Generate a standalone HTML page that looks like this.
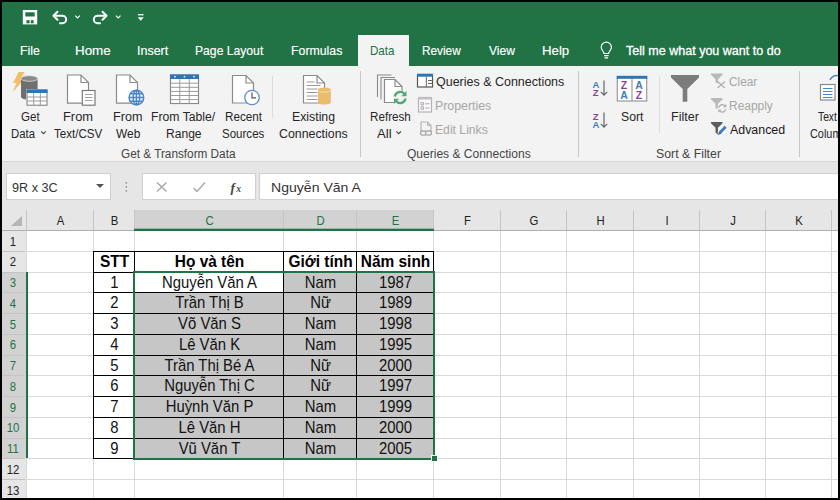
<!DOCTYPE html>
<html lang="vi"><head><meta charset="utf-8"><title>Excel</title>
<style>
html,body{margin:0;padding:0;}
body{width:840px;height:500px;overflow:hidden;background:#000;position:relative;font-family:"Liberation Sans",sans-serif;}
#app{position:absolute;left:0;top:0;width:840px;height:500px;background:#fff;overflow:hidden;}
#app > *{position:absolute;box-sizing:border-box;}
.t{white-space:nowrap;line-height:1;transform-origin:0 0;}
.c{text-align:center;}
#green{left:0;top:0;width:840px;height:66px;background:#217346;}
#ribbon{left:0;top:66px;width:840px;height:95px;background:#f3f3f3;}
#fbar{left:0;top:161px;width:840px;height:49px;background:#e6e6e6;border-top:1px solid #d6d6d6;}
.hdr{font-size:12.600px;color:#222;text-align:center;transform-origin:50% 0;transform:scaleX(0.9);}
.cell{font-size:15.700px;color:#111;text-align:center;transform-origin:50% 0;transform:scaleX(0.948);}
.b{font-weight:bold;color:#000;font-size:15.6px;transform:scaleX(0.99);}
.bk{background:#000;}
</style></head><body><div id="app">

<div id="green"></div>
<div id="ribbon"></div>
<div id="fbar"></div>
<div style="left:357.5px;top:35px;width:51px;height:31px;background:#f3f3f3;"></div>
<div style="left:6px;top:173px;width:104.500px;height:26.500px;background:#fff;border:1px solid #d0d0d0;"></div>
<div style="left:96.100px;top:183.600px;width:0;height:0;border-left:4.200px solid transparent;border-right:4.200px solid transparent;border-top:4px solid #555;"></div>
<div style="left:141.800px;top:173px;width:114px;height:26.500px;background:#fff;border:1px solid #d0d0d0;"></div>
<div style="left:259px;top:173px;width:600px;height:26.500px;background:#fff;border:1px solid #d0d0d0;"></div>
<div class="t" style="left:20.05px;top:43.9px;font-size:13px;color:#fff;-webkit-text-stroke:0.15px #fff;transform:scaleX(0.951);">File</div>
<div class="t" style="left:74.97px;top:43.9px;font-size:13px;color:#fff;-webkit-text-stroke:0.15px #fff;transform:scaleX(1.030);">Home</div>
<div class="t" style="left:136.5px;top:43.9px;font-size:13px;color:#fff;-webkit-text-stroke:0.15px #fff;transform:scaleX(0.960);">Insert</div>
<div class="t" style="left:195.07px;top:43.9px;font-size:13px;color:#fff;-webkit-text-stroke:0.15px #fff;transform:scaleX(0.935);">Page Layout</div>
<div class="t" style="left:290.75px;top:43.9px;font-size:13px;color:#fff;-webkit-text-stroke:0.15px #fff;transform:scaleX(0.948);">Formulas</div>
<div class="t" style="left:369.81px;top:43.9px;font-size:13px;color:#217346;transform:scaleX(0.891);">Data</div>
<div class="t" style="left:422.39px;top:43.9px;font-size:13px;color:#fff;-webkit-text-stroke:0.15px #fff;transform:scaleX(0.908);">Review</div>
<div class="t" style="left:489.07px;top:43.9px;font-size:13px;color:#fff;-webkit-text-stroke:0.15px #fff;transform:scaleX(0.926);">View</div>
<div class="t" style="left:542.28px;top:43.9px;font-size:13px;color:#fff;-webkit-text-stroke:0.15px #fff;transform:scaleX(1.018);">Help</div>
<div class="t" style="left:626.46px;top:43.9px;font-size:13px;color:#fff;-webkit-text-stroke:0.3px #fff;transform:scaleX(0.964);">Tell me what you want to do</div>
<div class="t" style="left:20.84px;top:111.22px;font-size:12.5px;color:#262626;transform:scaleX(0.923);">Get</div>
<div class="t" style="left:10.89px;top:127.82px;font-size:12.5px;color:#262626;transform:scaleX(0.910);">Data</div>
<div class="t" style="left:63.47px;top:111.22px;font-size:12.5px;color:#262626;transform:scaleX(1.028);">From</div>
<div class="t" style="left:54.27px;top:127.82px;font-size:12.5px;color:#262626;transform:scaleX(0.928);">Text/CSV</div>
<div class="t" style="left:112.79px;top:111.22px;font-size:12.5px;color:#262626;transform:scaleX(1.009);">From</div>
<div class="t" style="left:115.5px;top:127.82px;font-size:12.5px;color:#262626;transform:scaleX(0.952);">Web</div>
<div class="t" style="left:150.82px;top:111.22px;font-size:12.5px;color:#262626;transform:scaleX(0.976);">From Table/</div>
<div class="t" style="left:166.04px;top:127.82px;font-size:12.5px;color:#262626;transform:scaleX(0.965);">Range</div>
<div class="t" style="left:224.86px;top:111.22px;font-size:12.5px;color:#262626;transform:scaleX(0.935);">Recent</div>
<div class="t" style="left:221.81px;top:127.82px;font-size:12.5px;color:#262626;transform:scaleX(0.923);">Sources</div>
<div class="t" style="left:292.02px;top:111.22px;font-size:12.5px;color:#262626;transform:scaleX(0.983);">Existing</div>
<div class="t" style="left:279.26px;top:127.82px;font-size:12.5px;color:#262626;transform:scaleX(0.989);">Connections</div>
<div class="t" style="left:369.57px;top:111.22px;font-size:12.5px;color:#262626;transform:scaleX(0.933);">Refresh</div>
<div class="t" style="left:377.4px;top:127.82px;font-size:12.5px;color:#262626;transform:scaleX(1.046);">All</div>
<div class="t" style="left:620.67px;top:111.22px;font-size:12.5px;color:#262626;transform:scaleX(0.977);">Sort</div>
<div class="t" style="left:671px;top:111.22px;font-size:12.5px;color:#262626;transform:scaleX(1.004);">Filter</div>
<div class="t" style="left:435.8px;top:76.42px;font-size:12.5px;color:#262626;transform:scaleX(0.998);">Queries &amp; Connections</div>
<div class="t" style="left:435.31px;top:100.42px;font-size:12.5px;color:#a6a6a6;transform:scaleX(0.986);">Properties</div>
<div class="t" style="left:435.33px;top:124.42px;font-size:12.5px;color:#a6a6a6;transform:scaleX(0.974);">Edit Links</div>
<div class="t" style="left:729.29px;top:76.42px;font-size:12.5px;color:#a6a6a6;transform:scaleX(0.948);">Clear</div>
<div class="t" style="left:729.04px;top:100.42px;font-size:12.5px;color:#a6a6a6;transform:scaleX(0.956);">Reapply</div>
<div class="t" style="left:730px;top:124.12px;font-size:12.5px;color:#1a1a1a;transform:scaleX(0.992);">Advanced</div>
<div class="t" style="left:818.39px;top:111.22px;font-size:12.5px;color:#262626;transform:scaleX(0.822);">Text to</div>
<div class="t" style="left:810.15px;top:127.82px;font-size:12.5px;color:#262626;transform:scaleX(0.871);">Columns</div>
<div class="t" style="left:121.31px;top:148.14px;font-size:12px;color:#444;transform:scaleX(0.981);">Get &amp; Transform Data</div>
<div class="t" style="left:407px;top:148.14px;font-size:12px;color:#444;transform:scaleX(1.002);">Queries &amp; Connections</div>
<div class="t" style="left:656.49px;top:148.14px;font-size:12px;color:#444;transform:scaleX(1.026);">Sort &amp; Filter</div>
<div class="t" style="left:11.99px;top:181.62px;font-size:12.5px;color:#333;transform:scaleX(1.011);">9R x 3C</div>
<div class="t" style="left:271.46px;top:180.77px;font-size:13.5px;color:#333;transform:scaleX(1.042);">Nguyễn Văn A</div>
<div style="left:359.5px;top:71px;width:1px;height:86px;background:#c8c8c8"></div>
<div style="left:578px;top:71px;width:1px;height:86px;background:#c8c8c8"></div>
<div style="left:799px;top:71px;width:1px;height:86px;background:#c8c8c8"></div>
<div style="left:272px;top:76px;width:1px;height:42px;background:#dcdcdc"></div>
<div style="left:658.5px;top:76px;width:1px;height:57px;background:#dcdcdc"></div>
<svg style="left:0;top:0" width="840" height="500" viewBox="0 0 840 500">
<!-- Get Data -->
<path d="M18.500 72h6l-4.200 7.600h3.600l-11.300 12.600l3.800-9.200h-3.400z" fill="#f4bd6c"/>
<path d="M21 78.500v18.500a8.300 2.800 0 0 0 16.600 0v-18.500z" fill="#6f6f6f"/>
<ellipse cx="29.300" cy="78.500" rx="8.300" ry="2.800" fill="#8a8a8a" stroke="#e0e0e0" stroke-width="0.800"/>
<rect x="26" y="89" width="21.800" height="17" fill="#f3f3f3"/>
<rect x="27" y="90" width="20" height="15.200" fill="#fff" stroke="#7a7a7a" stroke-width="1"/>
<rect x="26.500" y="89.500" width="21" height="3.500" fill="#2e75b6"/>
<path d="M33.700 93v12M40.300 93v12M27 97h20M27 101h20" stroke="#9a9a9a" stroke-width="1" fill="none"/>
<!-- From Text/CSV -->
<path d="M67.500 75h13.500l7.500 7.500v20.700h-21z" fill="#fff" stroke="#8a8a8a" stroke-width="1.200"/>
<path d="M81 75v7.500h7.500" fill="none" stroke="#8a8a8a" stroke-width="1.200"/>
<rect x="82.300" y="90.500" width="12.700" height="14.700" fill="#fff" stroke="#7a7a7a" stroke-width="1.200"/>
<path d="M85 94.500h7.500M85 97.500h7.500M85 100.500h7.500" stroke="#a0a0a0" stroke-width="1.200"/>
<!-- From Web -->
<path d="M116.500 75h13.500l7.500 7.500v20.700h-21z" fill="#fff" stroke="#8a8a8a" stroke-width="1.200"/>
<path d="M130 75v7.500h7.500" fill="none" stroke="#8a8a8a" stroke-width="1.200"/>
<circle cx="136.400" cy="97.500" r="7.300" fill="#eef4fb" stroke="#4a86c8" stroke-width="1.500"/>
<g fill="none" stroke="#4a86c8" stroke-width="1.400"><ellipse cx="136.400" cy="97.500" rx="3.300" ry="7.200"/><path d="M136.400 90.300v14.400M129.200 97.500h14.400M130.500 93.800h11.800M130.500 101.200h11.800"/></g>
<!-- From Table/Range -->
<rect x="170.500" y="75" width="28" height="28.500" fill="#fff" stroke="#8a8a8a" stroke-width="1.200"/>
<rect x="170" y="74.500" width="29" height="4.500" fill="#2e75b6"/>
<path d="M179.800 79v24.500M189.300 79v24.500M170.500 83.200h28M170.500 87.300h28M170.500 91.400h28M170.500 95.500h28M170.500 99.600h28" stroke="#9a9a9a" stroke-width="1" fill="none"/>
<g fill="#dbe8f5"><circle cx="175" cy="76.700" r="0.900"/><circle cx="184.500" cy="76.700" r="0.900"/><circle cx="194" cy="76.700" r="0.900"/></g>
<!-- Recent Sources -->
<path d="M232.500 75.500h13.500l7.500 7.500v20h-21z" fill="#fff" stroke="#8a8a8a" stroke-width="1.200"/>
<path d="M246 75.500v7.500h7.500" fill="none" stroke="#8a8a8a" stroke-width="1.200"/>
<circle cx="252" cy="97.500" r="7.200" fill="#fff" stroke="#5b8fd0" stroke-width="1.300"/>
<path d="M252 92.500v5.300h4" fill="none" stroke="#555" stroke-width="1.200"/>
<!-- Existing Connections -->
<path d="M303.500 75.500h13.500l7.500 7.500v20h-21z" fill="#fff" stroke="#8a8a8a" stroke-width="1.200"/>
<path d="M317 75.500v7.500h7.500" fill="none" stroke="#8a8a8a" stroke-width="1.200"/>
<path d="M306.500 82h8M306.500 85.500h14M306.500 89h11M306.500 92.500h11M306.500 96h11M306.500 99.500h11" stroke="#9a9a9a" stroke-width="1"/>
<path d="M318 89.500v13a6.400 2 0 0 0 12.800 0v-13a6.400 2 0 0 0 -12.800 0z" fill="#e9bd6c"/>
<path d="M318.600 90.500a5.800 1.600 0 0 0 11.600 0" fill="none" stroke="#f8e6c4" stroke-width="0.800"/>
<!-- Refresh All -->
<path d="M377.500 97v-22h14" fill="none" stroke="#8a8a8a" stroke-width="1.100"/>
<path d="M381 99.500v-22h14" fill="none" stroke="#8a8a8a" stroke-width="1.100"/>
<path d="M384.500 79.500h10.500l7 7v16h-17.500z" fill="#fff" stroke="#8a8a8a" stroke-width="1.200"/>
<path d="M395 79.500v7h7" fill="none" stroke="#8a8a8a" stroke-width="1.200"/>
<circle cx="400.200" cy="97.500" r="7.300" fill="#f3f3f3"/>
<g fill="none" stroke="#4fa67d" stroke-width="2.200"><path d="M394.800 96.500a5.500 5.500 0 0 1 9.500-2.800"/><path d="M405.600 98.500a5.500 5.500 0 0 1 -9.500 2.800"/></g>
<path d="M406.500 91v5.200h-5.200z" fill="#4fa67d"/><path d="M393.900 104v-5.200h5.200z" fill="#4fa67d"/>
<!-- Queries & Connections small icon -->
<rect x="417.500" y="75" width="15" height="12" fill="#fff" stroke="#555" stroke-width="1.200"/>
<rect x="417" y="73.700" width="16" height="3" fill="#2e75b6"/>
<path d="M426.300 77v10M428 80.500h4M428 83.500h4" stroke="#666" stroke-width="1" fill="none"/>
<!-- Properties small icon -->
<rect x="418.500" y="97.500" width="13" height="14.500" fill="#fafafa" stroke="#b8b0b8" stroke-width="1.200"/>
<rect x="418" y="97" width="14" height="2.500" fill="#c4bcc4"/>
<path d="M421 102.500h2.500v2.500h-2.500zM421 106.800h2.500v2.500h-2.500zM425 103.800h4.500M425 108h4.500" stroke="#b0a8b0" stroke-width="1" fill="none"/>
<!-- Edit Links small icon -->
<path d="M421 122h6.500l3.500 3.500v8" fill="none" stroke="#b4b4b4" stroke-width="1.200"/><path d="M421 122v9" fill="none" stroke="#b4b4b4" stroke-width="1.200"/>
<path d="M427.500 122v3.500h3.500" fill="none" stroke="#b4b4b4" stroke-width="1"/>
<g fill="#f3f3f3" stroke="#a8a8a8" stroke-width="1.300"><rect x="420.500" y="131" width="6" height="4.200" rx="2.100"/><rect x="425.500" y="131" width="6" height="4.200" rx="2.100"/></g>
<!-- AZ sort icons -->
<g font-family="Liberation Sans, sans-serif" font-weight="bold" font-size="9.500">
<text x="592.500" y="88.300" fill="#3b7dc4">A</text><text x="592.800" y="96" fill="#8d3fa3">Z</text>
<text x="592.800" y="120.300" fill="#8d3fa3">Z</text><text x="592.500" y="128" fill="#3b7dc4">A</text>
</g>
<g fill="none" stroke="#666" stroke-width="1.200"><path d="M604 80.500v14.500M600.800 91.800l3.200 3.400l3.200-3.400"/><path d="M604 112.500v14.500M600.800 123.800l3.200 3.400l3.200-3.400"/></g>
<!-- Sort big icon -->
<rect x="617.300" y="77" width="29.400" height="24" fill="#fff" stroke="#9a9a9a" stroke-width="1.200"/>
<rect x="616.700" y="75.800" width="30.600" height="3" fill="#2e75b6"/>
<path d="M632 79v22" stroke="#9a9a9a" stroke-width="1.200"/>
<g font-family="Liberation Sans, sans-serif" font-weight="bold" font-size="10.500">
<text x="620.800" y="89.300" fill="#8d3fa3">Z</text><text x="620.300" y="98.800" fill="#3b7dc4">A</text>
<text x="635.300" y="89.300" fill="#3b7dc4">A</text><text x="635.800" y="98.800" fill="#8d3fa3">Z</text>
</g>
<!-- Filter -->
<path d="M671 75h28v2.500l-11.700 11.500v12.700h-4.600v-12.700l-11.700-11.500z" fill="#7c7c7c"/>
<!-- Clear -->
<path d="M711 73.500h11.500v1.300l-4.500 4.500v4.200l-2.500-1.200v-3l-4.500-4.500z" fill="#b8b8b8"/>
<path d="M717.500 81.500l7.500 6.500M725 81.500l-7.500 6.500" stroke="#b0b0b0" stroke-width="1.300" fill="none"/>
<!-- Reapply -->
<path d="M711 98h11.500v1.300l-4.500 4.500v5.500l-2.500-1.200v-4.300l-4.500-4.500z" fill="#b8b8b8"/>
<circle cx="722.300" cy="108.400" r="4.800" fill="#f3f3f3"/>
<g fill="none" stroke="#b0b0b0" stroke-width="1.400"><path d="M718.800 107.600a3.600 3.600 0 0 1 6.400-1.500"/><path d="M725.800 109.200a3.600 3.600 0 0 1 -6.400 1.500"/></g>
<path d="M726.300 104v3.200h-3.200z" fill="#b0b0b0"/><path d="M718.300 112.800v-3.200h3.200z" fill="#b0b0b0"/>
<!-- Advanced -->
<path d="M711 122h11.500v1.300l-4.500 4.500v6.500l-2.500-1.500v-5l-4.500-4.500z" fill="#5e5e5e"/>
<path d="M725.600 126.800l-6.600 6.800" stroke="#f3f3f3" stroke-width="4.600" fill="none"/>
<path d="M725.600 126.800l-6.200 6.400" stroke="#3b7dc4" stroke-width="2.800" fill="none"/>
<path d="M719.800 132.200l-2.600 3l3.800-1.400z" fill="#2b5d94"/>
<!-- Text to Columns -->
<rect x="820.500" y="84.500" width="14.500" height="15.500" fill="#fff" stroke="#8a8a8a" stroke-width="1.200"/>
<path d="M823 88.500h9.500M823 91.500h9.500M823 94.500h9.500M823 97.500h9.500" stroke="#4a86c8" stroke-width="1.200"/>
<path d="M830 80a8 8 0 0 1 8-4.500" fill="none" stroke="#4a86c8" stroke-width="1.500"/>
<!-- quick access -->
<rect x="22.800" y="10" width="14.400" height="14.400" fill="#fff"/>
<rect x="25.300" y="12.300" width="9.400" height="4.200" fill="#217346"/>
<rect x="26.400" y="20.200" width="3.200" height="3.100" fill="#217346"/><rect x="30.800" y="20.200" width="2.800" height="3.100" fill="#217346"/>
<g fill="none" stroke="#fff" stroke-width="2" stroke-linecap="round" stroke-linejoin="round">
<path d="M57.500 11.800l-4 4l4 4"/><path d="M54 15.800h8.500a3.700 3.700 0 0 1 0 7.400h-2.500"/>
<path d="M102.500 11.800l4 4l-4 4"/><path d="M106 15.800h-8.500a3.700 3.700 0 0 0 0 7.400h2.500"/>
</g>
<g fill="none" stroke="#fff" stroke-width="1.100">
<path d="M75.200 15.600l2.300 2.300l2.300-2.300"/><path d="M115.900 15.600l2.300 2.300l2.300-2.300"/>
</g>
<path d="M138 14.700h5.500" stroke="#fff" stroke-width="1.300"/><path d="M137.700 17.200h6.100l-3.050 3.600z" fill="#fff"/>
<!-- bulb -->
<g fill="none" stroke="#fff" stroke-width="1.200"><path d="M604 53.500c0-2-2.800-3.300-2.800-6.300a5.100 5.100 0 0 1 10.200 0c0 3-2.800 4.300-2.800 6.300z"/><path d="M604 55.600h4.600M604.500 57.800h3.600"/></g>
<!-- chevrons for Get Data / Refresh All -->
<g fill="none" stroke="#444" stroke-width="1.100"><path d="M41.200 131.300l2.300 2.300l2.300-2.300"/><path d="M396.400 131.300l2.300 2.300l2.300-2.300"/></g>
<!-- formula bar icons -->
<g fill="#8e8e8e"><circle cx="126.300" cy="182.800" r="0.900"/><circle cx="126.300" cy="186.800" r="0.900"/><circle cx="126.300" cy="190.800" r="0.900"/></g>
<g fill="none" stroke="#a6a6a6" stroke-width="1.300"><path d="M157 182.500l9.500 9M166.500 182.500l-9.500 9"/><path d="M193.500 188l3.500 3.500l8-9"/></g>
<text x="230.500" y="191.500" font-family="Liberation Serif, serif" font-style="italic" font-weight="bold" font-size="13.500" fill="#444">f</text><text x="236.300" y="192" font-family="Liberation Serif, serif" font-style="italic" font-weight="bold" font-size="9.500" fill="#444">x</text>
</svg>

<div style="left:0;top:210px;width:840px;height:300px;background:#fff;"></div>
<div style="left:0;top:210px;width:840px;height:20px;background:#e6e6e6;"></div>
<div style="left:0;top:210px;width:26px;height:300px;background:#e6e6e6;"></div>
<div style="left:134px;top:210px;width:299px;height:20px;background:#d2d2d2;"></div>
<div style="left:0px;top:271.5px;width:26px;height:186.75px;background:#d2d2d2;"></div>
<div style="left:10.800px;top:216px;width:0;height:0;border-left:11.700px solid transparent;border-bottom:10.200px solid #b5b5b5;"></div>
<div style="left:26px;top:231px;width:1px;height:270px;background:#d9d9d9;"></div>
<div style="left:26px;top:210px;width:1px;height:20px;background:#c4c4c4;"></div>
<div style="left:93px;top:231px;width:1px;height:270px;background:#d9d9d9;"></div>
<div style="left:93px;top:210px;width:1px;height:20px;background:#c4c4c4;"></div>
<div style="left:134px;top:231px;width:1px;height:270px;background:#d9d9d9;"></div>
<div style="left:134px;top:210px;width:1px;height:18px;background:#c4c4c4;"></div>
<div style="left:283px;top:231px;width:1px;height:270px;background:#d9d9d9;"></div>
<div style="left:283px;top:210px;width:1px;height:18px;background:#c4c4c4;"></div>
<div style="left:356px;top:231px;width:1px;height:270px;background:#d9d9d9;"></div>
<div style="left:356px;top:210px;width:1px;height:18px;background:#c4c4c4;"></div>
<div style="left:433px;top:231px;width:1px;height:270px;background:#d9d9d9;"></div>
<div style="left:433px;top:210px;width:1px;height:18px;background:#c4c4c4;"></div>
<div style="left:500px;top:231px;width:1px;height:270px;background:#d9d9d9;"></div>
<div style="left:500px;top:210px;width:1px;height:20px;background:#c4c4c4;"></div>
<div style="left:566px;top:231px;width:1px;height:270px;background:#d9d9d9;"></div>
<div style="left:566px;top:210px;width:1px;height:20px;background:#c4c4c4;"></div>
<div style="left:633px;top:231px;width:1px;height:270px;background:#d9d9d9;"></div>
<div style="left:633px;top:210px;width:1px;height:20px;background:#c4c4c4;"></div>
<div style="left:699px;top:231px;width:1px;height:270px;background:#d9d9d9;"></div>
<div style="left:699px;top:210px;width:1px;height:20px;background:#c4c4c4;"></div>
<div style="left:765px;top:231px;width:1px;height:270px;background:#d9d9d9;"></div>
<div style="left:765px;top:210px;width:1px;height:20px;background:#c4c4c4;"></div>
<div style="left:831px;top:231px;width:1px;height:270px;background:#d9d9d9;"></div>
<div style="left:831px;top:210px;width:1px;height:20px;background:#c4c4c4;"></div>
<div style="left:26px;top:230px;width:814px;height:1px;background:#d9d9d9;"></div>
<div style="left:0px;top:230px;width:25px;height:1px;background:#c4c4c4;"></div>
<div style="left:26px;top:250.75px;width:814px;height:1px;background:#d9d9d9;"></div>
<div style="left:0px;top:250.75px;width:25px;height:1px;background:#c4c4c4;"></div>
<div style="left:26px;top:271.5px;width:814px;height:1px;background:#d9d9d9;"></div>
<div style="left:0px;top:271.5px;width:25px;height:1px;background:#c4c4c4;"></div>
<div style="left:26px;top:292.25px;width:814px;height:1px;background:#d9d9d9;"></div>
<div style="left:0px;top:292.25px;width:25px;height:1px;background:#c4c4c4;"></div>
<div style="left:26px;top:313px;width:814px;height:1px;background:#d9d9d9;"></div>
<div style="left:0px;top:313px;width:25px;height:1px;background:#c4c4c4;"></div>
<div style="left:26px;top:333.75px;width:814px;height:1px;background:#d9d9d9;"></div>
<div style="left:0px;top:333.75px;width:25px;height:1px;background:#c4c4c4;"></div>
<div style="left:26px;top:354.5px;width:814px;height:1px;background:#d9d9d9;"></div>
<div style="left:0px;top:354.5px;width:25px;height:1px;background:#c4c4c4;"></div>
<div style="left:26px;top:375.25px;width:814px;height:1px;background:#d9d9d9;"></div>
<div style="left:0px;top:375.25px;width:25px;height:1px;background:#c4c4c4;"></div>
<div style="left:26px;top:396px;width:814px;height:1px;background:#d9d9d9;"></div>
<div style="left:0px;top:396px;width:25px;height:1px;background:#c4c4c4;"></div>
<div style="left:26px;top:416.75px;width:814px;height:1px;background:#d9d9d9;"></div>
<div style="left:0px;top:416.75px;width:25px;height:1px;background:#c4c4c4;"></div>
<div style="left:26px;top:437.5px;width:814px;height:1px;background:#d9d9d9;"></div>
<div style="left:0px;top:437.5px;width:25px;height:1px;background:#c4c4c4;"></div>
<div style="left:26px;top:458.25px;width:814px;height:1px;background:#d9d9d9;"></div>
<div style="left:0px;top:458.25px;width:25px;height:1px;background:#c4c4c4;"></div>
<div style="left:26px;top:479px;width:814px;height:1px;background:#d9d9d9;"></div>
<div style="left:0px;top:479px;width:25px;height:1px;background:#c4c4c4;"></div>
<div style="left:26px;top:499.75px;width:814px;height:1px;background:#d9d9d9;"></div>
<div style="left:0px;top:499.75px;width:25px;height:1px;background:#c4c4c4;"></div>
<div style="left:25.500px;top:271.5px;width:2px;height:186.75px;background:#217346;"></div>
<div style="left:0px;top:230px;width:133.500px;height:1px;background:#b0b0b0;"></div>
<div style="left:434px;top:230px;width:410px;height:1px;background:#b0b0b0;"></div>
<div style="left:134px;top:228px;width:300px;height:1px;background:#9bb5a6;"></div>
<div style="left:134px;top:229px;width:300px;height:2px;background:#217346;"></div>
<div class="t hdr" style="left:27px;width:67px;top:214.73px;">A</div>
<div class="t hdr" style="left:94px;width:41px;top:214.73px;">B</div>
<div class="t hdr" style="left:135px;width:149px;top:214.73px;color:#217346;">C</div>
<div class="t hdr" style="left:284px;width:73px;top:214.73px;color:#217346;">D</div>
<div class="t hdr" style="left:357px;width:77px;top:214.73px;color:#217346;">E</div>
<div class="t hdr" style="left:434px;width:67px;top:214.73px;">F</div>
<div class="t hdr" style="left:501px;width:66px;top:214.73px;">G</div>
<div class="t hdr" style="left:567px;width:67px;top:214.73px;">H</div>
<div class="t hdr" style="left:634px;width:66px;top:214.73px;">I</div>
<div class="t hdr" style="left:700px;width:66px;top:214.73px;">J</div>
<div class="t hdr" style="left:766px;width:66px;top:214.73px;">K</div>
<div class="t hdr" style="left:2px;width:22px;top:235.53px;">1</div>
<div class="t hdr" style="left:2px;width:22px;top:256.28px;">2</div>
<div class="t hdr" style="left:2px;width:22px;top:277.03px;color:#217346;">3</div>
<div class="t hdr" style="left:2px;width:22px;top:297.78px;color:#217346;">4</div>
<div class="t hdr" style="left:2px;width:22px;top:318.53px;color:#217346;">5</div>
<div class="t hdr" style="left:2px;width:22px;top:339.28px;color:#217346;">6</div>
<div class="t hdr" style="left:2px;width:22px;top:360.03px;color:#217346;">7</div>
<div class="t hdr" style="left:2px;width:22px;top:380.78px;color:#217346;">8</div>
<div class="t hdr" style="left:2px;width:22px;top:401.53px;color:#217346;">9</div>
<div class="t hdr" style="left:2px;width:22px;top:422.28px;color:#217346;">10</div>
<div class="t hdr" style="left:2px;width:22px;top:443.03px;color:#217346;">11</div>
<div class="t hdr" style="left:2px;width:22px;top:463.78px;">12</div>
<div class="t hdr" style="left:2px;width:22px;top:484.53px;">13</div>
<div style="left:134px;top:271.5px;width:299px;height:186.75px;background:#c6c6c6;"></div>
<div style="left:134px;top:271.5px;width:149px;height:20.75px;background:#fff;"></div>
<div class="bk" style="left:93px;top:250.75px;width:1px;height:208.5px;"></div>
<div class="bk" style="left:134px;top:250.75px;width:1px;height:208.5px;"></div>
<div class="bk" style="left:283px;top:250.75px;width:1px;height:208.5px;"></div>
<div class="bk" style="left:356px;top:250.75px;width:1px;height:208.5px;"></div>
<div class="bk" style="left:433px;top:250.75px;width:1px;height:208.5px;"></div>
<div class="bk" style="left:93px;top:250.75px;width:341px;height:1px;"></div>
<div class="bk" style="left:93px;top:271.5px;width:341px;height:1px;"></div>
<div class="bk" style="left:93px;top:292.25px;width:341px;height:1px;"></div>
<div class="bk" style="left:93px;top:313px;width:341px;height:1px;"></div>
<div class="bk" style="left:93px;top:333.75px;width:341px;height:1px;"></div>
<div class="bk" style="left:93px;top:354.5px;width:341px;height:1px;"></div>
<div class="bk" style="left:93px;top:375.25px;width:341px;height:1px;"></div>
<div class="bk" style="left:93px;top:396px;width:341px;height:1px;"></div>
<div class="bk" style="left:93px;top:416.75px;width:341px;height:1px;"></div>
<div class="bk" style="left:93px;top:437.5px;width:341px;height:1px;"></div>
<div class="bk" style="left:93px;top:458.25px;width:341px;height:1px;"></div>
<div class="t cell b" style="left:94px;width:41px;top:253.84px;">STT</div>
<div class="t cell b" style="left:135px;width:149px;top:253.84px;">Họ và tên</div>
<div class="t cell b" style="left:284px;width:73px;top:253.84px;">Giới tính</div>
<div class="t cell b" style="left:357px;width:77px;top:253.84px;">Năm sinh</div>
<div class="t cell" style="left:94px;width:41px;top:274.51px;">1</div>
<div class="t cell" style="left:135px;width:149px;top:274.51px;">Nguyễn Văn A</div>
<div class="t cell" style="left:284px;width:73px;top:274.51px;">Nam</div>
<div class="t cell" style="left:357px;width:77px;top:274.51px;">1987</div>
<div class="t cell" style="left:94px;width:41px;top:295.26px;">2</div>
<div class="t cell" style="left:135px;width:149px;top:295.26px;">Trần Thị B</div>
<div class="t cell" style="left:284px;width:73px;top:295.26px;">Nữ</div>
<div class="t cell" style="left:357px;width:77px;top:295.26px;">1989</div>
<div class="t cell" style="left:94px;width:41px;top:316.01px;">3</div>
<div class="t cell" style="left:135px;width:149px;top:316.01px;">Võ Văn S</div>
<div class="t cell" style="left:284px;width:73px;top:316.01px;">Nam</div>
<div class="t cell" style="left:357px;width:77px;top:316.01px;">1998</div>
<div class="t cell" style="left:94px;width:41px;top:336.76px;">4</div>
<div class="t cell" style="left:135px;width:149px;top:336.76px;">Lê Văn K</div>
<div class="t cell" style="left:284px;width:73px;top:336.76px;">Nam</div>
<div class="t cell" style="left:357px;width:77px;top:336.76px;">1995</div>
<div class="t cell" style="left:94px;width:41px;top:357.51px;">5</div>
<div class="t cell" style="left:135px;width:149px;top:357.51px;">Trần Thị Bé A</div>
<div class="t cell" style="left:284px;width:73px;top:357.51px;">Nữ</div>
<div class="t cell" style="left:357px;width:77px;top:357.51px;">2000</div>
<div class="t cell" style="left:94px;width:41px;top:378.26px;">6</div>
<div class="t cell" style="left:135px;width:149px;top:378.26px;">Nguyễn Thị C</div>
<div class="t cell" style="left:284px;width:73px;top:378.26px;">Nữ</div>
<div class="t cell" style="left:357px;width:77px;top:378.26px;">1997</div>
<div class="t cell" style="left:94px;width:41px;top:399.01px;">7</div>
<div class="t cell" style="left:135px;width:149px;top:399.01px;">Huỳnh Văn P</div>
<div class="t cell" style="left:284px;width:73px;top:399.01px;">Nam</div>
<div class="t cell" style="left:357px;width:77px;top:399.01px;">1999</div>
<div class="t cell" style="left:94px;width:41px;top:419.76px;">8</div>
<div class="t cell" style="left:135px;width:149px;top:419.76px;">Lê Văn H</div>
<div class="t cell" style="left:284px;width:73px;top:419.76px;">Nam</div>
<div class="t cell" style="left:357px;width:77px;top:419.76px;">2000</div>
<div class="t cell" style="left:94px;width:41px;top:440.51px;">9</div>
<div class="t cell" style="left:135px;width:149px;top:440.51px;">Vũ Văn T</div>
<div class="t cell" style="left:284px;width:73px;top:440.51px;">Nam</div>
<div class="t cell" style="left:357px;width:77px;top:440.51px;">2005</div>
<div style="left:133px;top:270.5px;width:302px;height:189.25px;border:2px solid #217346;"></div>
<div style="left:430.500px;top:455.25px;width:7px;height:7px;background:#217346;border:1px solid #fff;"></div>
<div class="bk" style="left:0;top:0;width:840px;height:2px;"></div>
<div class="bk" style="left:0;top:497.500px;width:840px;height:3px;"></div>
<div class="bk" style="left:0;top:0;width:2.200px;height:500px;"></div>
<div class="bk" style="left:838px;top:0;width:2px;height:500px;"></div>
</div></body></html>
